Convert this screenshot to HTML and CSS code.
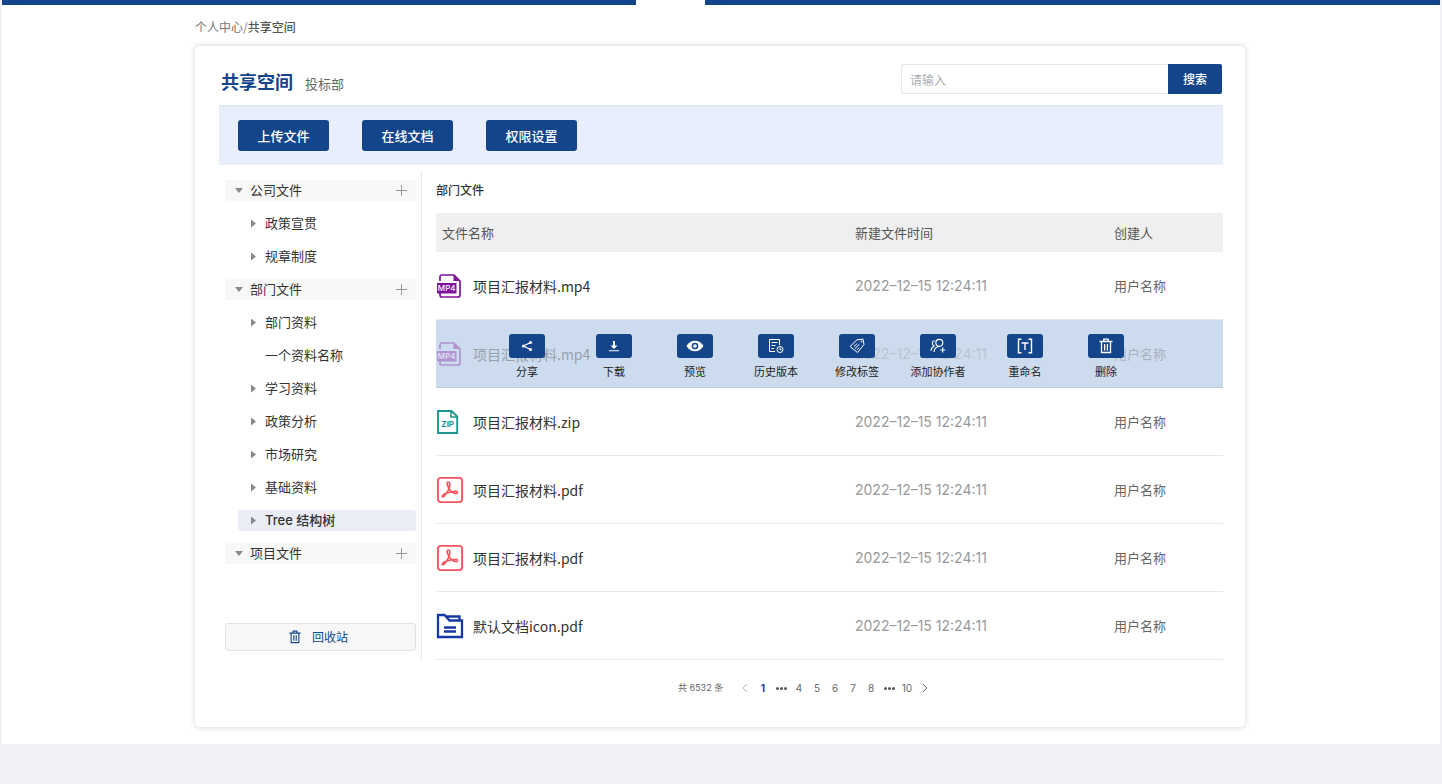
FILE: index.html
```html
<!DOCTYPE html>
<html lang="zh-CN">
<head>
<meta charset="utf-8">
<title>共享空间</title>
<link rel="stylesheet" href="styles.css">
</head>
<body>
<svg class="sprite" aria-hidden="true">
  <symbol id="trash" viewBox="0 0 14 16"><path d="M.5 3.500h13M4.800 3.500V1.200h4.400v2.300M2.500 3.500v11h9v-11M5.600 6v6.500M8.400 6v6.500" fill="none" stroke="currentColor" stroke-width="1.300"/></symbol>
  <symbol id="pdf" viewBox="0 0 28 28"><rect x="1.900" y="1.900" width="24.200" height="24.200" rx="3" fill="none" stroke="#f8535c" stroke-width="1.900"/><path d="M13 12.500C10.500 8.500 10.800 6 12.300 6S14.500 8.500 13 12.500C11.800 15.500 10 18.500 8 20.300 6.500 21.500 5.500 20.300 6.800 19 9 17 14 16.300 18 15.500 20.500 15 21.800 15.500 21.500 16.800 21 18.300 18.500 17.500 16.500 16.300 14.800 15.200 13.700 14 13 12.500z" fill="none" stroke="#f8535c" stroke-width="1.600" stroke-linejoin="round"/></symbol>
</svg>
<div class="page">
  <div class="topbar"><span class="topbar-left"></span><span class="topbar-right"></span></div>
  <div class="container">
    <nav class="breadcrumb"><a href="#">个人中心</a>/<b>共享空间</b></nav>
    <main class="card">
      <header class="card-head">
        <h1>共享空间</h1><span class="dept">投标部</span>
        <form class="search"><input type="text" aria-label="搜索文件" placeholder="请输入"><button type="button">搜索</button></form>
      </header>
      <div class="toolbar">
        <button type="button">上传文件</button><button type="button">在线文档</button><button type="button">权限设置</button>
      </div>
      <div class="body">
        <aside class="sidebar">
          <ul class="tree">
            <li class="node root"><i class="caret down"></i><span>公司文件</span><button type="button" class="add" aria-label="新增"></button></li>
            <li class="node"><i class="caret"></i><span>政策宣贯</span></li>
            <li class="node"><i class="caret"></i><span>规章制度</span></li>
            <li class="node root"><i class="caret down"></i><span>部门文件</span><button type="button" class="add" aria-label="新增"></button></li>
            <li class="node"><i class="caret"></i><span>部门资料</span></li>
            <li class="node"><i class="caret none"></i><span>一个资料名称</span></li>
            <li class="node"><i class="caret"></i><span>学习资料</span></li>
            <li class="node"><i class="caret"></i><span>政策分析</span></li>
            <li class="node"><i class="caret"></i><span>市场研究</span></li>
            <li class="node"><i class="caret"></i><span>基础资料</span></li>
            <li class="node selected"><i class="caret"></i><span>Tree 结构树</span></li>
            <li class="node root"><i class="caret down"></i><span>项目文件</span><button type="button" class="add" aria-label="新增"></button></li>
          </ul>
          <button type="button" class="recycle"><svg width="12" height="14"><use href="#trash"/></svg>回收站</button>
        </aside>
        <section class="files">
          <h2>部门文件</h2>
          <table>
            <thead><tr><th class="col-name">文件名称</th><th class="col-time">新建文件时间</th><th class="col-user">创建人</th></tr></thead>
            <tbody>
              <tr><td><div class="file"><svg width="26" height="26" viewBox="0 0 26 26"><path d="M4 8V4a2 2 0 0 1 2-2h12l6 6v14a2 2 0 0 1-2 2H6a2 2 0 0 1-2-2v-2" fill="none" stroke="#7f129b" stroke-width="1.700"/><path d="M17.500 1.500V8H24zM1 10h19.500v10.500H2a1 1 0 0 1-1-1z" fill="#7f129b"/><text x="10.700" y="18" text-anchor="middle" class="mp4-text">MP4</text></svg>项目汇报材料.mp4</div></td><td class="time">2022–12–15 12:24:11</td><td class="user">用户名称</td></tr>
              <tr class="active"><td><div class="file"><svg width="26" height="26" viewBox="0 0 26 26"><path d="M4 8V4a2 2 0 0 1 2-2h12l6 6v14a2 2 0 0 1-2 2H6a2 2 0 0 1-2-2v-2" fill="none" stroke="#7f129b" stroke-width="1.700"/><path d="M17.500 1.500V8H24zM1 10h19.500v10.500H2a1 1 0 0 1-1-1z" fill="#7f129b"/><text x="10.700" y="18" text-anchor="middle" class="mp4-text">MP4</text></svg>项目汇报材料.mp4</div></td><td class="time"><span>2022–12–15 12:24:11</span></td><td class="user"><span>用户名称</span>
                <div class="actions">
                  <div class="group">
                    <button type="button" class="action"><span class="tile"><svg width="12" height="12" viewBox="0 0 12 12"><path d="M9.500 2.500 2.500 6l7 3.500" fill="none" stroke="#fff" stroke-width="1.200"/><g fill="#fff"><circle cx="9.500" cy="2.500" r="1.600"/><circle cx="2.500" cy="6" r="1.600"/><circle cx="9.500" cy="9.500" r="1.600"/></g></svg></span>分享</button>
                  </div>
                  <div class="group">
                    <button type="button" class="action"><span class="tile"><svg width="12" height="12" viewBox="0 0 12 12"><path d="M5 1h2v4.500h2.500L6 9 2.500 5.500H5zM1 10.200h10v1H1z" fill="#fff"/></svg></span>下载</button>
                    <button type="button" class="action"><span class="tile"><svg width="18" height="12" viewBox="0 0 18 12"><path d="M.5 6C2.500 2.500 5.500.800 9 .800S15.500 2.500 17.500 6C15.500 9.500 12.500 11.200 9 11.200S2.500 9.500.5 6z" fill="#fff"/><circle cx="9" cy="6" r="2.600" fill="none" stroke="#14458b" stroke-width="1.500"/></svg></span>预览</button>
                    <button type="button" class="action"><span class="tile"><svg width="16" height="16" viewBox="0 0 16 16" fill="none" stroke="#fff"><path d="M11.500 7V1.500h-10v12H7M3.500 4.500h6M3.500 7.500h4M3.500 10.500H6"/><circle cx="12" cy="11.500" r="3"/><path d="M12 9.700v2h1.500"/></svg></span>历史版本</button>
                    <button type="button" class="action"><span class="tile"><svg width="16" height="16" viewBox="0 0 16 16" fill="none" stroke="#fff"><path d="M1 8.500 8 1.800l6-.6 1 5.300-6.500 8zM5 8.500l3-2.800M6 10.500l4.500-4.300M8 11.800l2-2"/><circle cx="12.500" cy="3.500" r=".5"/></svg></span>修改标签</button>
                    <button type="button" class="action"><span class="tile"><svg width="16" height="16" viewBox="0 0 16 16" fill="none" stroke="#fff" stroke-width="1.200"><circle cx="9.300" cy="4.800" r="3.500"/><path d="M4.500 2.500C1.600 3.500 1.800 7 4 8 2.200 9 1.200 10.500 1 12.800M4 14c.2-3.500 2.800-5.500 6-5.500M12.700 9.500v5M10.200 12h5"/></svg></span>添加协作者</button>
                  </div>
                  <div class="group">
                    <button type="button" class="action"><span class="tile"><svg width="16" height="16" viewBox="0 0 16 16" fill="none" stroke="#fff" stroke-width="1.400"><path d="M4.500 1.200h-3v13.600h3M11.500 1.200h3v13.600h-3M4.500 5h7M8 5v7"/></svg></span>重命名</button>
                    <button type="button" class="action"><span class="tile"><svg width="14" height="16"><use href="#trash"/></svg></span>删除</button>
                  </div>
                </div></td></tr>
              <tr><td><div class="file"><svg width="26" height="26" viewBox="0 0 26 26"><path d="M2 2h13.500L21.200 7.500V24H2z" fill="none" stroke="#1f9692" stroke-width="1.900"/><path d="M15 2v6h6" fill="none" stroke="#1f9692" stroke-width="1.600"/><text x="11.700" y="18" text-anchor="middle" class="zip-text">ZIP</text></svg>项目汇报材料.zip</div></td><td class="time">2022–12–15 12:24:11</td><td class="user">用户名称</td></tr>
              <tr><td><div class="file"><svg width="28" height="28"><use href="#pdf"/></svg>项目汇报材料.pdf</div></td><td class="time">2022–12–15 12:24:11</td><td class="user">用户名称</td></tr>
              <tr><td><div class="file"><svg width="28" height="28"><use href="#pdf"/></svg>项目汇报材料.pdf</div></td><td class="time">2022–12–15 12:24:11</td><td class="user">用户名称</td></tr>
              <tr><td><div class="file"><svg width="28" height="28" viewBox="0 0 28 28" fill="none" stroke="#1739a5" stroke-width="2.300"><path d="M2 3h6.500l5 5.500H26V25H2zM9.500 4.500H23.500V8M8 15.500h12M8 19.500h12"/></svg>默认文档icon.pdf</div></td><td class="time">2022–12–15 12:24:11</td><td class="user">用户名称</td></tr>
            </tbody>
          </table>
          <nav class="pager" aria-label="分页">
            <span class="total">共 6532 条</span>
            <button type="button" aria-label="上一页" class="prev"><svg width="6" height="10" viewBox="0 0 6 10"><path d="M5 1 1 5l4 4" fill="none" stroke="currentColor"/></svg></button>
            <button type="button" class="current">1</button><span class="dots"><i></i><i></i><i></i></span><button type="button">4</button><button type="button">5</button><button type="button">6</button><button type="button">7</button><button type="button">8</button><span class="dots"><i></i><i></i><i></i></span><button type="button">10</button>
            <button type="button" aria-label="下一页" class="next"><svg width="6" height="10" viewBox="0 0 6 10"><path d="m1 1 4 4-4 4" fill="none" stroke="currentColor"/></svg></button>
          </nav>
        </section>
      </div>
    </main>
  </div>
</div>
</body>
</html>
```
FILE: styles.css
```css
* { box-sizing: border-box; }
body { margin: 0; background: #f0f1f5; color: #333; font: 13px/20px "Noto Sans CJK SC", sans-serif; }
button { border: 0; padding: 0; background: none; font: inherit; color: inherit; cursor: pointer; }
ul { list-style: none; margin: 0; padding: 0; }
h1, h2 { margin: 0; font-weight: 500; }
svg { flex: none; display: block; }
.sprite { position: absolute; width: 0; height: 0; }
.mp4-text { font: 500 8px "Inter", sans-serif; fill: #fff; }
.zip-text { font: 700 8px "Inter", sans-serif; fill: #1f9692; }

.page { margin: 0 2px; background: #fff; padding-bottom: 17px; }
.topbar { display: flex; gap: 69px; height: 5px; }
.topbar span { background: #14458b; }
.topbar-left { flex: 634; }
.topbar-right { flex: 735; }
.container { max-width: 1052px; margin: 0 auto; padding-right: 2px; }
.breadcrumb { padding: 12px 0 9px; font-size: 12px; color: #777; }
.breadcrumb a { color: inherit; text-decoration: none; }
.breadcrumb b { font-weight: 500; color: #555; }

.card { background: #fff; border-radius: 5px; box-shadow: 0 0 6px rgba(0, 0, 0, .18); padding: 18px 22px 30px 24px; }
.card-head { display: flex; align-items: center; height: 41px; padding: 0 1px 11px 2px; }
.card-head h1 { font-size: 18px; line-height: 26px; font-weight: 700; color: #14458b; padding-top: 3px; }
.dept { padding: 9px 0 0 12px; color: #666; }
.search { display: flex; width: 321px; height: 30px; margin-left: auto; }
.search input { flex: 1; min-width: 0; border: 1px solid #e2e5ed; border-right: 0; border-radius: 3px 0 0 3px; padding: 0 8px; font: 12px "Noto Sans CJK SC", sans-serif; outline: 0; }
.search input::placeholder { color: #aaadb5; }
.search button { width: 54px; background: #14458b; color: #fff; font-size: 12px; font-weight: 500; border-radius: 0 2px 2px 0; }
.toolbar { display: flex; gap: 33px; align-items: center; height: 60px; padding-left: 19px; background: #e8eefb; border-top: 1px solid #dfe5f0; }
.toolbar button { width: 91px; height: 31px; border-radius: 3px; background: #14458b; color: #fff; font-weight: 500; }

.body { display: flex; padding-top: 6px; }
.sidebar { width: 203px; height: 489px; flex: none; display: flex; flex-direction: column; padding: 9px 5px 9px 6px; border-right: 1px solid #ebebeb; }
.tree { display: flex; flex-direction: column; gap: 12px; }
.node { display: flex; align-items: center; height: 21px; margin-left: 13px; padding-left: 13px; border-radius: 3px; }
.node span { padding-bottom: 2px; }
.node.root { margin-left: 0; padding: 0 9px 0 10px; background: #f7f7f7; }
.node.selected { background: #eaedf6; font-family: "Inter", "Noto Sans CJK SC", sans-serif; font-weight: 500; }
.caret { width: 5px; height: 8px; margin-right: 9px; background: #888; clip-path: polygon(0 0, 100% 50%, 0 100%); }
.caret.down { width: 8px; height: 5px; margin-right: 7px; clip-path: polygon(0 0, 100% 0, 50% 100%); }
.caret.none { background: none; }
.add { width: 11px; height: 11px; margin-left: auto; background: linear-gradient(#999, #999) center / 11px 1px no-repeat, linear-gradient(#999, #999) center / 1px 11px no-repeat; }
.recycle { display: flex; align-items: center; justify-content: center; gap: 11px; height: 28px; margin-top: auto; padding-right: 4px; border: 1px solid #e2e2e2; border-radius: 3px; background: #f7f7f7; color: #14458b; font-size: 12px; }

.files { flex: 1; min-width: 0; padding: 9px 0 0 14px; }
.files h2 { font-size: 12px; line-height: 20px; }
table { width: 100%; margin-top: 13px; border-collapse: separate; border-spacing: 0; table-layout: fixed; }
th { height: 39px; padding: 0; background: #efefef; text-align: left; font-weight: 400; color: #555; }
th.col-name { padding-left: 6px; }
.col-time { width: 259px; }
.col-user { width: 109px; }
td { height: 68px; padding: 0; border-bottom: 1px solid #e8e8e8; }
.file { display: flex; align-items: center; font-size: 14px; }
.file svg { margin-right: 11px; }
.file svg[width="28"] { margin-right: 9px; }
.time { font-family: "Inter", sans-serif; font-size: 14px; color: #999; }
.user { color: #666; }
.active { position: relative; background: #cddbee; }
.active td { border-color: #c3ccd8; }
.active .file, .active td > span { opacity: .35; }
.actions { position: absolute; inset: 0; display: flex; gap: 51px; padding: 14px 0 0 73px; }
.group { display: flex; gap: 45px; }
.action { display: flex; flex-direction: column; align-items: center; gap: 5px; width: 36px; height: 45px; font-size: 11px; line-height: 16px; color: #222; white-space: nowrap; }
.tile { display: flex; align-items: center; justify-content: center; flex: none; width: 36px; height: 24px; border-radius: 3px; background: #14458b; color: #fff; }

.pager { display: flex; align-items: center; margin-top: 19px; padding-left: 242px; height: 18px; font: 10px/18px "Inter", "Noto Sans CJK SC", sans-serif; color: #666; }
.total { width: 58px; font-size: 9px; }
.pager button, .dots { display: flex; align-items: center; justify-content: center; width: 18px; height: 18px; }
.pager .current { color: #1739a5; font-weight: 700; }
.pager .prev { color: #aaa; }
.dots { gap: 1px; }
.dots i { width: 3px; height: 3px; border-radius: 50%; background: #555; }
```
